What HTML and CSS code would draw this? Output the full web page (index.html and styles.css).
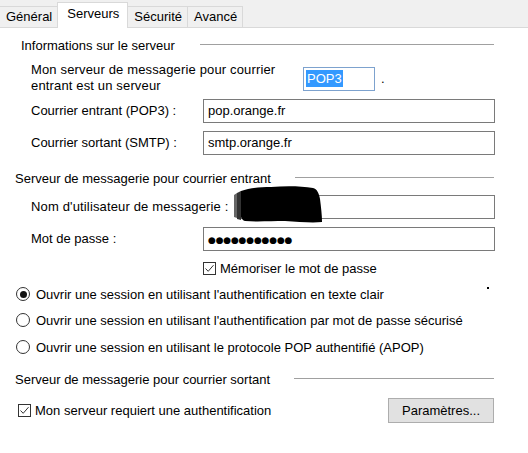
FILE: index.html
```html
<!DOCTYPE html>
<html lang="fr">
<head>
<meta charset="utf-8">
<link rel="stylesheet" href="styles.css">
</head>
<body>
<div class="tabs">
  <div class="tab">Général</div>
  <div class="tab active">Serveurs</div>
  <div class="tab">Sécurité</div>
  <div class="tab">Avancé</div>
</div>
<div class="panel">
  <div class="head head-first"><span>Informations sur le serveur</span><span class="rule"></span></div>
  <div class="row row-type">
    <div class="label label-wide">Mon serveur de messagerie pour courrier<br>entrant est un serveur</div>
    <div class="field field-small"><span class="sel">POP3</span></div>
    <span class="period">.</span>
  </div>
  <div class="row row-a">
    <div class="label">Courrier entrant (POP3) :</div>
    <div class="field">pop.orange.fr</div>
  </div>
  <div class="row row-b">
    <div class="label">Courrier sortant (SMTP) :</div>
    <div class="field">smtp.orange.fr</div>
  </div>

  <div class="head head-second"><span>Serveur de messagerie pour courrier entrant</span><span class="rule"></span></div>
  <div class="row row-user">
    <div class="label label-user">Nom d'utilisateur de messagerie :</div>
    <div class="field"></div>
    <svg class="scribble" width="92" height="40" viewBox="0 0 92 40">
      <path d="M8 6 C16 3 26 2 38 2 C52 1 68 1 80 3 C84 4 86 8 87 14 C88 22 89 30 89 37 C80 38 66 37 52 36 C38 36 24 37 12 36 C8 35 7 30 7 24 C6 18 6 10 8 6 Z" fill="#000"/>
      <path d="M1 10 L4 8 L4 33 L1 32 Z" fill="#666"/>
      <path d="M4 8 L8 6 L8 35 L4 34 Z" fill="#333"/>
    </svg>
  </div>
  <div class="row row-pass">
    <div class="label">Mot de passe :</div>
    <div class="field"><span class="dots">●●●●●●●●●●●</span></div>
  </div>
  <div class="row row-remember">
    <span class="check"><svg width="13" height="13" viewBox="0 0 13 13"><path d="M2.5 6.5 L5.2 9.3 L10.5 3.2" fill="none" stroke="#333" stroke-width="1"/></svg></span>
    <span>Mémoriser le mot de passe</span>
  </div>
  <div class="radio-row radio-first">
    <span class="radio on"></span>
    <span>Ouvrir une session en utilisant l'authentification en texte clair</span>
    <span class="spacer"></span>
    <span class="dot"></span>
  </div>
  <div class="radio-row radio-second">
    <span class="radio"></span>
    <span>Ouvrir une session en utilisant l'authentification par mot de passe sécurisé</span>
  </div>
  <div class="radio-row radio-third">
    <span class="radio"></span>
    <span>Ouvrir une session en utilisant le protocole POP authentifié (APOP)</span>
  </div>

  <div class="head head-third"><span>Serveur de messagerie pour courrier sortant</span><span class="rule"></span></div>
  <div class="auth-row">
    <span class="check"><svg width="13" height="13" viewBox="0 0 13 13"><path d="M2.5 6.5 L5.2 9.3 L10.5 3.2" fill="none" stroke="#333" stroke-width="1"/></svg></span>
    <span>Mon serveur requiert une authentification</span>
    <span class="spacer"></span>
    <div class="button">Paramètres...</div>
  </div>
</div>
</body>
</html>
```
FILE: styles.css
```css
html, body {
  margin: 0;
  padding: 0;
  background: #fff;
}
body {
  font-family: "Liberation Sans", Arial, sans-serif;
  font-size: 13px;
  color: #000;
  width: 528px;
  height: 453px;
  overflow: hidden;
}
.tabs {
  display: flex;
  align-items: flex-end;
  height: 27px;
  background: #f0f0f0;
  border-bottom: 1px solid #d9d9d9;
}
.tab {
  height: 20px;
  line-height: 20px;
  padding: 0 5px 0 6px;
  border: 1px solid #d9d9d9;
  border-bottom: none;
  margin-left: -1px;
  background: #f0f0f0;
}
.tab:first-child {
  margin-left: 0;
  border-left: none;
}
.tab.active {
  background: #fff;
  height: 25px;
  line-height: 22px;
  margin-bottom: -1px;
  padding: 0 8px 0 9px;
  position: relative;
  z-index: 1;
}
.panel {
  display: flex;
  flex-direction: column;
  padding: 0 33px 0 0;
  position: relative;
}
.head {
  display: flex;
  align-items: center;
  height: 16px;
  line-height: 16px;
  padding-left: 15px;
}
.head .rule {
  flex: 1;
  height: 1px;
  background: #a0a0a0;
  margin-left: 24px;
  margin-right: 1px;
  margin-top: -3px;
}
.head-first { margin-top: 10px; padding-left: 21px; }
.head-first .rule { margin-left: 25px; }
.head-second { margin-top: 16px; }
.head-third { margin-top: 17px; }
.row {
  display: flex;
  align-items: center;
  padding-left: 31px;
  height: 24px;
  position: relative;
}
.label {
  width: 172px;
  flex: none;
  line-height: 16px;
  white-space: nowrap;
}
.label-wide {
  width: 272px;
  letter-spacing: 0.15px;
}
.label-user {
  width: 209px;
  letter-spacing: 0.15px;
}
.row-type {
  height: 32px;
  align-items: flex-start;
  margin-top: 8px;
}
.row-a { margin-top: 5px; }
.row-b { margin-top: 8px; }
.row-user { margin-top: 8px; }
.row-pass { margin-top: 8px; }
.field {
  flex: 1;
  height: 24px;
  box-sizing: border-box;
  border: 1px solid #7a7a7a;
  padding: 0 4px;
  line-height: 22px;
  background: #fff;
}
.field-small {
  flex: none;
  width: 72px;
  margin-top: 5px;
  border-color: #7da2ce;
  padding-left: 2px;
}
.sel {
  background: #3399ff;
  color: #fff;
  padding: 1px 1px;
}
.period {
  margin-top: 9px;
  margin-left: 6px;
}
.dots {
  font-family: "DejaVu Sans", sans-serif;
  font-size: 9px;
  letter-spacing: -0.2px;
}
.scribble {
  position: absolute;
  left: 233px;
  top: -10px;
}
.row-remember {
  display: flex;
  align-items: center;
  gap: 4px;
  padding-left: 203px;
  height: 16px;
  margin-top: 9px;
}
.check {
  width: 13px;
  height: 13px;
  box-sizing: border-box;
  border: 1px solid #333;
  background: #fff;
  display: block;
  position: relative;
  flex: none;
}
.check svg {
  position: absolute;
  left: -1px;
  top: -1px;
}
.radio-row {
  display: flex;
  align-items: center;
  gap: 6px;
  padding-left: 16px;
  height: 16px;
}
.radio-first { margin-top: 10px; }
.radio-second { margin-top: 10px; }
.radio-third { margin-top: 11px; }
.radio {
  width: 14px;
  height: 14px;
  box-sizing: border-box;
  border: 1px solid #333;
  border-radius: 50%;
  display: flex;
  align-items: center;
  justify-content: center;
  background: #fff;
  flex: none;
}
.radio.on::after {
  content: "";
  width: 7px;
  height: 7px;
  border-radius: 50%;
  background: #111;
}
.spacer { flex: 1; }
.dot {
  width: 2px;
  height: 2px;
  background: #000;
  align-self: flex-start;
  margin-top: 1px;
  margin-right: 6px;
}
.auth-row {
  display: flex;
  align-items: center;
  gap: 4px;
  padding-left: 18px;
  margin-top: 10px;
  height: 25px;
}
.button {
  width: 106px;
  height: 25px;
  box-sizing: border-box;
  border: 1px solid #adadad;
  background: #e1e1e1;
  text-align: center;
  line-height: 23px;
  margin-right: 1px;
}
```
